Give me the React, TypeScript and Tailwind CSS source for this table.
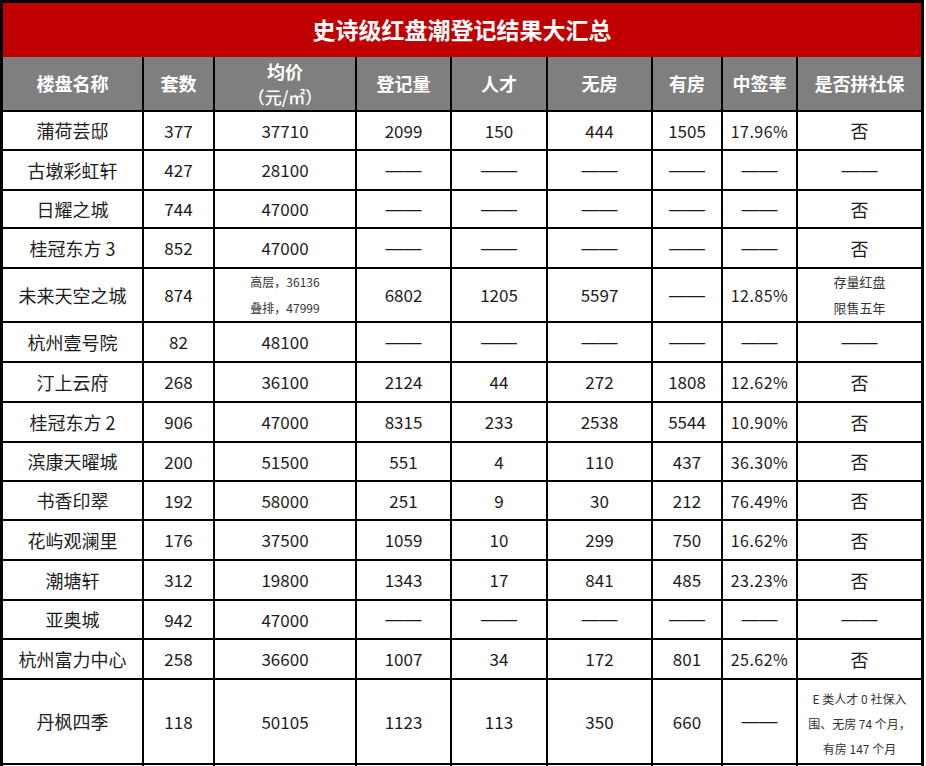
import type { ReactNode } from "react";

const DASH = "——";

const header = ["楼盘名称", "套数", "均价", "登记量", "人才", "无房", "有房", "中签率", "是否拼社保"];

const small = (lines: string[], size = "text-[12px]") => (
  <div className={`flex flex-col items-center leading-[26px] text-[#333] ${size}`}>
    {lines.map((l) => <span key={l}>{l}</span>)}
  </div>
);

const data: ReactNode[][] = [
  ["蒲荷芸邸", "377", "37710", "2099", "150", "444", "1505", "17.96%", "否"],
  ["古墩彩虹轩", "427", "28100", DASH, DASH, DASH, DASH, DASH, DASH],
  ["日耀之城", "744", "47000", DASH, DASH, DASH, DASH, DASH, "否"],
  ["桂冠东方 3", "852", "47000", DASH, DASH, DASH, DASH, DASH, "否"],
  ["未来天空之城", "874", small(["高层，36136", "叠排，47999"]), "6802", "1205", "5597", DASH, "12.85%", small(["存量红盘", "限售五年"], "text-[13px]")],
  ["杭州壹号院", "82", "48100", DASH, DASH, DASH, DASH, DASH, DASH],
  ["汀上云府", "268", "36100", "2124", "44", "272", "1808", "12.62%", "否"],
  ["桂冠东方 2", "906", "47000", "8315", "233", "2538", "5544", "10.90%", "否"],
  ["滨康天曜城", "200", "51500", "551", "4", "110", "437", "36.30%", "否"],
  ["书香印翠", "192", "58000", "251", "9", "30", "212", "76.49%", "否"],
  ["花屿观澜里", "176", "37500", "1059", "10", "299", "750", "16.62%", "否"],
  ["潮塘轩", "312", "19800", "1343", "17", "841", "485", "23.23%", "否"],
  ["亚奥城", "942", "47000", DASH, DASH, DASH, DASH, DASH, DASH],
  ["杭州富力中心", "258", "36600", "1007", "34", "172", "801", "25.62%", "否"],
  ["丹枫四季", "118", "50105", "1123", "113", "350", "660", DASH, (
    <div className="flex flex-col items-center text-[12px] leading-[25px] text-[#333] pt-[3px]">
      <span>E 类人才 0 社保入</span>
      <span>围、无房 74 个月，</span>
      <span>有房 147 个月</span>
    </div>
  )],
  ["", "", "", "", "", "", "", "", ""],
];

function cellClass(v: ReactNode, col: number) {
  if (v === DASH) return "text-[18px] font-['Liberation_Sans',sans-serif]";
  if (typeof v !== "string") return "";
  if (col === 0 || v === "否") return "text-[18px]";
  if (col === 7) return "text-[16px] tracking-[0.5px]";
  return "text-[17px]";
}

export default function App() {
  return (
    <div className="w-[926px] h-[766px] overflow-hidden bg-white font-['Noto_Sans_CJK_SC',sans-serif] text-[#1c1c1c]">
      <div className="w-[924px] border-x-[3px] border-t-[3px] border-black">
        <div className="h-[54px] bg-[#c00000] flex items-center justify-center text-white text-[23px] font-bold pb-[1px]">
          史诗级红盘潮登记结果大汇总
        </div>
        <div className="grid bg-black gap-[2px] grid-cols-[139px_69px_140px_93px_94px_103px_68px_73px_123px] grid-rows-[53px_37px_38px_36px_38px_52px_38px_38px_38px_37px_37px_38px_38px_37px_38px_83px_40px]">
          {header.map((h, i) => (
            <div key={h} className="bg-[#7f7f7f] text-white font-bold text-[18px] flex flex-col items-center justify-center">
              {i === 2 ? (
                <>
                  <span className="leading-[25px]">均价</span>
                  <span className="leading-[25px] text-[17px] font-medium">（元/㎡）</span>
                </>
              ) : (
                <span>{h}</span>
              )}
            </div>
          ))}
          {data.map((row, r) =>
            row.map((v, c) => (
              <div key={`${r}-${c}`} className={`bg-white flex items-center justify-center ${cellClass(v, c)}`}>
                {v}
              </div>
            ))
          )}
        </div>
      </div>
    </div>
  );
}
